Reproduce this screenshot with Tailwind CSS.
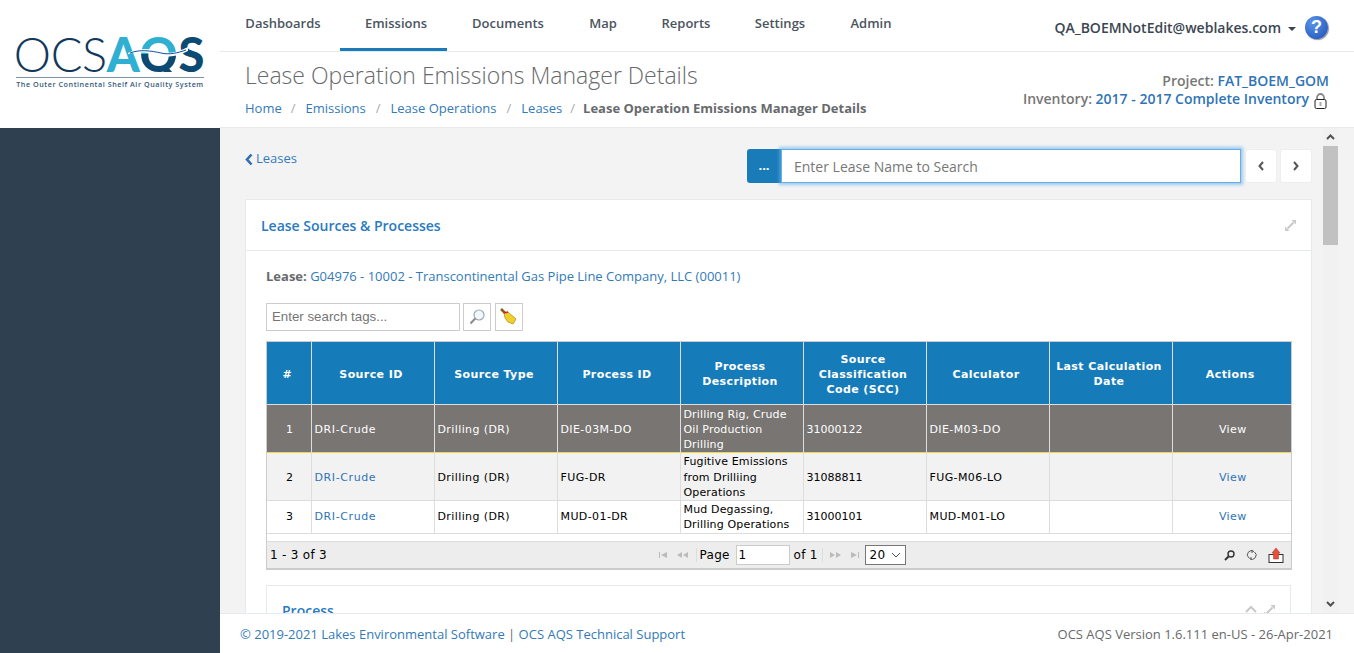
<!DOCTYPE html>
<html lang="en">
  <head>
    <meta charset="UTF-8" />
    <title>Lease Operation Emissions Manager Details</title>
    <script src="https://cdn.jsdelivr.net/npm/@tailwindcss/browser@4"></script>
  </head>
  <body class="h-[653px] w-[1354px] overflow-hidden bg-[#f3f3f4] font-['Open_Sans',sans-serif] text-[13px] text-[#676a6c]">
    <div class="flex h-[653px]">
      <!-- Sidebar -->
      <div class="w-[220px] shrink-0 bg-[#2f4050]">
        <div class="relative h-[128px] bg-white pt-[36px]">
          <div class="flex h-[36px] justify-center pr-[1px] font-['Lato',sans-serif] text-[47px] leading-[36px]">
            <span class="font-light tracking-[-0.4px] text-[#12395b]">OCS</span>
            <span class="font-black tracking-[0.8px]"><span class="text-[#2fb0d2]">A</span><span class="bg-[linear-gradient(#2fb0d2_50%,#0d4a73_50%)] bg-clip-text text-transparent">Q</span><span class="text-[#0d4a73]">S</span></span>
          </div>
          <svg class="absolute left-[128px] top-[44px]" width="60" height="20" viewBox="0 0 60 20">
            <path d="M0 9 C12 3 24 5 34 8 C42 10 50 8 60 3 L60 7 C50 12 42 14 32 11 C24 9 12 7 0 10Z" fill="#fff" />
            <path d="M2 9 C12 5 24 7 33 9 C41 11 50 9 58 6" fill="none" stroke="#0f4f9c" stroke-width="1" />
          </svg>
          <!-- white box hides the tail of the Q, the logo's Q sits on the rule -->
          <div class="relative bg-white pt-[5px]">
            <div class="mx-[16px] border-t border-[#7d93a8] pt-[1px] text-center text-[7.2px] font-semibold leading-[10px] tracking-[0.55px] whitespace-nowrap text-[#33597a]">The Outer Continental Shelf Air Quality System</div>
          </div>
        </div>
      </div>

      <!-- Main column -->
      <div class="flex h-[653px] w-[1134px] flex-col">
        <!-- Top nav -->
        <div class="flex h-[52px] shrink-0 items-start justify-between border-b border-[#e7eaec] bg-white">
          <div class="flex pl-[2px] text-[13px] font-semibold text-[#4a5560]">
            <a class="flex h-[51px] w-[118px] items-start justify-center pl-[4px] pt-[14px]">Dashboards</a>
            <a class="flex h-[51px] w-[107px] items-start justify-center border-b-[3px] border-[#1a7bb9] pl-[5px] pt-[14px]">Emissions</a>
            <a class="flex h-[51px] w-[118px] items-start justify-center pl-[4px] pt-[14px]">Documents</a>
            <a class="flex h-[51px] w-[72px] items-start justify-center pl-[4px] pt-[14px]">Map</a>
            <a class="flex h-[51px] w-[94px] items-start justify-center pl-[4px] pt-[14px]">Reports</a>
            <a class="flex h-[51px] w-[96px] items-start justify-center pl-[2px] pt-[14px]">Settings</a>
            <a class="flex h-[51px] w-[92px] items-start justify-center pr-[4px] pt-[14px]">Admin</a>
          </div>
          <div class="flex items-center pr-[26px] pt-[16px]">
            <span class="text-[14px] font-semibold leading-[20px] text-[#3a4652]">QA_BOEMNotEdit@weblakes.com</span>
            <span class="ml-[7px] mt-[2px] h-0 w-0 border-x-[4px] border-t-[4px] border-x-transparent border-t-[#3a4652]"></span>
            <span class="ml-[9px] flex h-[23px] w-[23px] items-center justify-center rounded-full bg-[radial-gradient(circle_at_35%_30%,#5b93e8,#1b4fb5)] font-['Liberation_Sans',sans-serif] text-[18px] font-bold text-white shadow-[1px_1px_1px_#999]">?</span>
          </div>
        </div>

        <!-- Page heading -->
        <div class="flex h-[76px] shrink-0 justify-between border-b border-[#e7eaec] bg-white pl-[25px] pr-[25px]">
          <div>
            <h2 class="mt-[8px] text-[23px] font-[300] leading-[31px] text-[#676a6c]">Lease Operation Emissions Manager Details</h2>
            <div class="mt-[8px] flex text-[13px] leading-[18px] text-[#337ab7]">
              <a>Home</a><span class="ml-[9px] mr-[10px] text-[#aaa]">/</span>
              <a>Emissions</a><span class="ml-[10px] mr-[10px] text-[#aaa]">/</span>
              <a>Lease Operations</a><span class="ml-[10px] mr-[10px] text-[#aaa]">/</span>
              <a>Leases</a><span class="ml-[8px] mr-[8px] text-[#aaa]">/</span>
              <strong class="font-bold text-[#676a6c]">Lease Operation Emissions Manager Details</strong>
            </div>
          </div>
          <div class="pt-[20px] text-right text-[14px] font-semibold leading-[18px] text-[#777]">
            <div>Project: <a class="text-[#2f74b5]">FAT_BOEM_GOM</a></div>
            <div class="flex h-[18px] items-start justify-end pr-[2px]">Inventory:&nbsp;<a class="text-[#2f74b5]">2017 - 2017 Complete Inventory</a>
              <svg class="ml-[5px] mt-[3px]" width="13" height="16" viewBox="0 0 13 16">
                <path d="M3 7V4.5a3.5 3.5 0 0 1 7 0V7" fill="none" stroke="#888" stroke-width="1.8" />
                <rect x="1" y="6.5" width="11" height="9" rx="1.5" fill="#fff" stroke="#222" />
                <path d="M6.5 9v4" stroke="#aaa" stroke-width="2" />
              </svg>
            </div>
          </div>
        </div>

        <!-- Scroll area -->
        <div class="relative h-[485px] shrink-0 overflow-hidden">
          <div class="w-[1092px] pl-[25px]">
            <div class="flex h-[71px] justify-between">
              <a class="mt-[22px] flex h-[18px] items-center text-[13px] text-[#337ab7]">
                <svg class="mr-[3px]" width="8" height="13" viewBox="0 0 8 13"><path d="M6.5 1.5 2 6.5l4.5 5" fill="none" stroke="#2f6fae" stroke-width="2.6" /></svg>Leases
              </a>
              <div class="mt-[21px] flex h-[34px]">
                <span class="flex h-[34px] w-[34px] items-center justify-center rounded-l-[3px] bg-[#1a7bb9] text-[13px] font-bold text-white">...</span>
                <div class="flex h-[34px] w-[460px] items-center border border-[#66afe9] bg-white pl-[12px] text-[14px] text-[#777] shadow-[0_0_3px_2px_rgba(102,175,233,0.6)]">Enter Lease Name to Search</div>
                <span class="ml-[4px] flex h-[34px] w-[32px] items-center justify-center rounded-[3px] border border-[#eee] bg-white">
                  <svg width="8" height="10" viewBox="0 0 8 10"><path d="M6 1 2.5 5 6 9" fill="none" stroke="#555" stroke-width="2" /></svg>
                </span>
                <span class="ml-[3px] flex h-[34px] w-[32px] items-center justify-center rounded-[3px] border border-[#eee] bg-white">
                  <svg width="8" height="10" viewBox="0 0 8 10"><path d="M2 1l3.5 4L2 9" fill="none" stroke="#555" stroke-width="2" /></svg>
                </span>
              </div>
            </div>

            <!-- Card -->
            <div class="border border-[#e7eaec] bg-white">
              <div class="flex h-[51px] items-center justify-between border-b border-[#e7eaec] pl-[15px] pr-[14px]">
                <span class="text-[14px] font-semibold text-[#2a7ac0]">Lease Sources &amp; Processes</span>
                <svg width="13" height="13" viewBox="0 0 13 13"><path d="M7.5 1H12v4.5zM1 12V7.5L5.5 12z" fill="#c9c9c9" /><path d="M9.5 3.5l-6 6" stroke="#c9c9c9" stroke-width="2" /></svg>
              </div>
              <div class="px-[20px]">
                <div class="pt-[16px] text-[13px] leading-[18px]"><b class="font-bold">Lease:</b> <a class="text-[#337ab7]">G04976 - 10002 - Transcontinental Gas Pipe Line Company, LLC (00011)</a></div>

                <div class="mt-[18px] flex gap-[3px]">
                  <div class="flex h-[28px] w-[194px] items-center border border-[#ccc] pl-[5px] font-['Liberation_Sans',sans-serif] text-[13.3px] text-[#757575]">Enter search tags...</div>
                  <span class="flex h-[28px] w-[28px] items-center justify-center border border-[#ccc]">
                    <svg width="18" height="18" viewBox="0 0 18 18"><circle cx="11" cy="7" r="5" fill="#f4f8fb" stroke="#9aa9b5" stroke-width="1.2" /><path d="M7.2 10.5 2.5 15.5" stroke="#8a8a8a" stroke-width="2" /></svg>
                  </span>
                  <span class="ml-[1px] flex h-[28px] w-[28px] items-center justify-center border border-[#ccc]">
                    <svg width="18" height="18" viewBox="0 0 18 18"><path d="M1 1l4 4" stroke="#8a5a1a" stroke-width="2.5" /><path d="M4 5l4-1 8 7-3 5-5-2-3-4z" fill="#f0d030" stroke="#b59a10" stroke-width=".8" /><path d="M4 5l4-1" stroke="#c23" stroke-width="1.5" /></svg>
                  </span>
                </div>

                <!-- Grid -->
                <div class="mt-[10px] w-[1026px] border border-b-2 border-[#ccc] font-['DejaVu_Sans',sans-serif] text-[11px] text-black">
                  <table class="w-[1024px] table-fixed border-collapse">
                    <colgroup>
                      <col class="w-[44px]" /><col class="w-[123px]" /><col class="w-[123px]" /><col class="w-[123px]" /><col class="w-[123px]" /><col class="w-[123px]" /><col class="w-[123px]" /><col class="w-[123px]" /><col />
                    </colgroup>
                    <thead>
                      <tr class="h-[62px] bg-[#167cb9] text-center text-[11px] leading-[15px] tracking-[0.4px] text-white">
                        <th class="border-r border-b border-[#ddd] pr-[3px] pt-[3px] font-bold">#</th>
                        <th class="border-r border-b border-[#ddd] pr-[3px] pt-[3px] font-bold">Source ID</th>
                        <th class="border-r border-b border-[#ddd] pr-[3px] pt-[3px] font-bold">Source Type</th>
                        <th class="border-r border-b border-[#ddd] pr-[3px] pt-[3px] font-bold">Process ID</th>
                        <th class="border-r border-b border-[#ddd] pr-[3px] pt-[3px] font-bold">Process<br />Description</th>
                        <th class="border-r border-b border-[#ddd] pr-[3px] pt-[3px] font-bold">Source<br />Classification<br />Code (SCC)</th>
                        <th class="border-r border-b border-[#ddd] pr-[3px] pt-[3px] font-bold">Calculator</th>
                        <th class="border-r border-b border-[#ddd] pr-[3px] pt-[3px] font-bold">Last Calculation<br />Date</th>
                        <th class="border-b border-[#ddd] pr-[3px] pt-[3px] font-bold">Actions</th>
                      </tr>
                    </thead>
                    <tbody class="tracking-[0.4px]">
                      <tr class="h-[48px] border-b border-[#e8d94a] bg-[#787573] leading-[15.3px] text-white">
                        <td class="border-r border-[#ddd] pl-[2px] pt-[2px] text-center">1</td>
                        <td class="border-r border-[#ddd] pl-[3px] pt-[2px] tracking-[0.6px]">DRI-Crude</td>
                        <td class="border-r border-[#ddd] pl-[3px] pt-[2px]">Drilling (DR)</td>
                        <td class="border-r border-[#ddd] pl-[3px] pt-[2px]">DIE-03M-DO</td>
                        <td class="border-r border-[#ddd] pl-[3px] pt-[2px] tracking-[0.15px]">Drilling Rig, Crude Oil Production Drilling</td>
                        <td class="border-r border-[#ddd] pl-[3px] pt-[2px] tracking-normal">31000122</td>
                        <td class="border-r border-[#ddd] pl-[3px] pt-[2px]">DIE-M03-DO</td>
                        <td class="border-r border-[#ddd]"></td>
                        <td class="pl-[2px] pt-[2px] text-center">View</td>
                      </tr>
                      <tr class="h-[47px] border-b border-[#ddd] bg-[#f2f2f2] leading-[15.3px]">
                        <td class="border-r border-[#ddd] pl-[2px] pt-[1px] text-center">2</td>
                        <td class="border-r border-[#ddd] pl-[3px] pt-[1px] tracking-[0.6px] text-[#2f74b5]">DRI-Crude</td>
                        <td class="border-r border-[#ddd] pl-[3px] pt-[1px]">Drilling (DR)</td>
                        <td class="border-r border-[#ddd] pl-[3px] pt-[1px]">FUG-DR</td>
                        <td class="border-r border-[#ddd] pl-[3px] pt-[1px] tracking-[0.15px]">Fugitive Emissions from Drilliing Operations</td>
                        <td class="border-r border-[#ddd] pl-[3px] pt-[1px] tracking-normal">31088811</td>
                        <td class="border-r border-[#ddd] pl-[3px] pt-[1px]">FUG-M06-LO</td>
                        <td class="border-r border-[#ddd]"></td>
                        <td class="pl-[2px] pt-[1px] text-center text-[#2f74b5]">View</td>
                      </tr>
                      <tr class="h-[33px] border-b border-[#ddd] bg-white leading-[15.6px]">
                        <td class="border-r border-[#ddd] pl-[2px] text-center">3</td>
                        <td class="border-r border-[#ddd] pl-[3px] tracking-[0.6px] text-[#2f74b5]">DRI-Crude</td>
                        <td class="border-r border-[#ddd] pl-[3px]">Drilling (DR)</td>
                        <td class="border-r border-[#ddd] pl-[3px]">MUD-01-DR</td>
                        <td class="border-r border-[#ddd] pl-[3px] tracking-[0.15px]">Mud Degassing, Drilling Operations</td>
                        <td class="border-r border-[#ddd] pl-[3px] tracking-normal">31000101</td>
                        <td class="border-r border-[#ddd] pl-[3px]">MUD-M01-LO</td>
                        <td class="border-r border-[#ddd]"></td>
                        <td class="pl-[2px] text-center text-[#2f74b5]">View</td>
                      </tr>
                    </tbody>
                  </table>
                  <div class="h-[7px]"></div>
                  <!-- Pager -->
                  <div class="grid h-[27px] grid-cols-[1fr_auto_1fr] items-center border-t border-[#ddd] bg-[#ededed] pl-[3px] text-[12px] tracking-[0.3px]">
                    <span>1 - 3 of 3</span>
                    <div class="ml-[2px] flex items-center">
                      <svg width="33" height="8" viewBox="0 0 33 8" fill="#bbb"><path d="M1 1h1v6H1zM3 4l6-3v6zM19 4l5-3v6zM25 4l5-3v6z" /></svg>
                      <span class="ml-[5px] h-[14px] w-px bg-[#ddd]"></span>
                      <span class="ml-[3px] w-[32px]">Page</span>
                      <span class="ml-[4px] flex h-[20px] w-[54px] items-center border border-[#ccc] bg-white pl-[2px]">1</span>
                      <span class="ml-[4px] w-[25px]">of 1</span>
                      <span class="ml-[3px] h-[14px] w-px bg-[#ddd]"></span>
                      <svg class="ml-[7px]" width="31" height="8" viewBox="0 0 31 8" fill="#bbb"><path d="M0 1l5 3-5 3zM6 1l5 3-5 3zM21 1l6 3-6 3zM28 1h1v6h-1z" /></svg>
                      <span class="ml-[4px] flex h-[20px] w-[41px] items-center justify-between border border-[#767676] bg-white px-[4px]">20
                        <svg width="10" height="6" viewBox="0 0 10 6"><path d="M1 1l4 4 4-4" fill="none" stroke="#555" /></svg>
                      </span>
                    </div>
                    <div class="flex items-center justify-end gap-[11px] pr-[7px]">
                      <svg width="11" height="11" viewBox="0 0 11 11"><circle cx="7" cy="4" r="3" fill="none" stroke="#333" stroke-width="1.4" /><path d="M4.5 6.5 1 10" stroke="#333" stroke-width="2" /></svg>
                      <svg width="11" height="12" viewBox="0 0 11 12"><path d="M8 2.5A4 4 0 0 0 3 9M3.5 9.5A4 4 0 0 0 8.5 3" fill="none" stroke="#555" /><path d="M6 1v3M5 8v3" stroke="#555" /></svg>
                      <svg width="16" height="15" viewBox="0 0 16 15"><rect x="1" y="6.5" width="14" height="8" fill="#fff" stroke="#333" /><path d="M8 0l4 5h-1.5v6h-5V5H4z" fill="#e8503a" stroke="#a33" stroke-width=".5" /></svg>
                    </div>
                  </div>
                </div>

                <!-- Process panel, cut off by the footer -->
                <div class="mt-[15px] flex h-[60px] w-[1025px] justify-between border border-[#e7eaec] pl-[15px] pr-[14px] pt-[15px]">
                  <span class="text-[14px] font-semibold leading-[20px] text-[#2a7ac0]">Process</span>
                  <div class="flex items-start gap-[5px] pt-[3px]">
                    <svg width="14" height="10" viewBox="0 0 14 10"><path d="M2 8l5-5 5 5" fill="none" stroke="#c9c9c9" stroke-width="2" /></svg>
                    <svg width="13" height="13" viewBox="0 0 13 13"><path d="M7.5 1H12v4.5zM1 12V7.5L5.5 12z" fill="#c9c9c9" /><path d="M9.5 3.5l-6 6" stroke="#c9c9c9" stroke-width="2" /></svg>
                  </div>
                </div>
              </div>
            </div>
          </div>

          <!-- Scrollbar -->
          <div class="absolute left-[1103px] top-0 flex h-[485px] w-[15px] flex-col bg-[#f1f1f1]">
            <div class="flex h-[18px] items-center justify-center">
              <svg width="9" height="6" viewBox="0 0 9 6"><path d="M1 5l3.5-3.5L8 5" fill="none" stroke="#505050" stroke-width="2" /></svg>
            </div>
            <div class="h-[99px] bg-[#c1c1c1]"></div>
            <div class="mt-auto flex h-[18px] items-center justify-center">
              <svg width="9" height="6" viewBox="0 0 9 6"><path d="M1 1l3.5 3.5L8 1" fill="none" stroke="#505050" stroke-width="2" /></svg>
            </div>
          </div>
        </div>

        <!-- Footer -->
        <div class="flex h-[40px] shrink-0 items-center justify-between border-t border-[#e7eaec] bg-white pl-[20px] pr-[21px] pt-[2px] text-[13px]">
          <div><a class="text-[#337ab7]">© 2019-2021 Lakes Environmental Software</a> | <a class="text-[#337ab7]">OCS AQS Technical Support</a></div>
          <div>OCS AQS Version 1.6.111 en-US - 26-Apr-2021</div>
        </div>
      </div>
    </div>
  </body>
</html>
